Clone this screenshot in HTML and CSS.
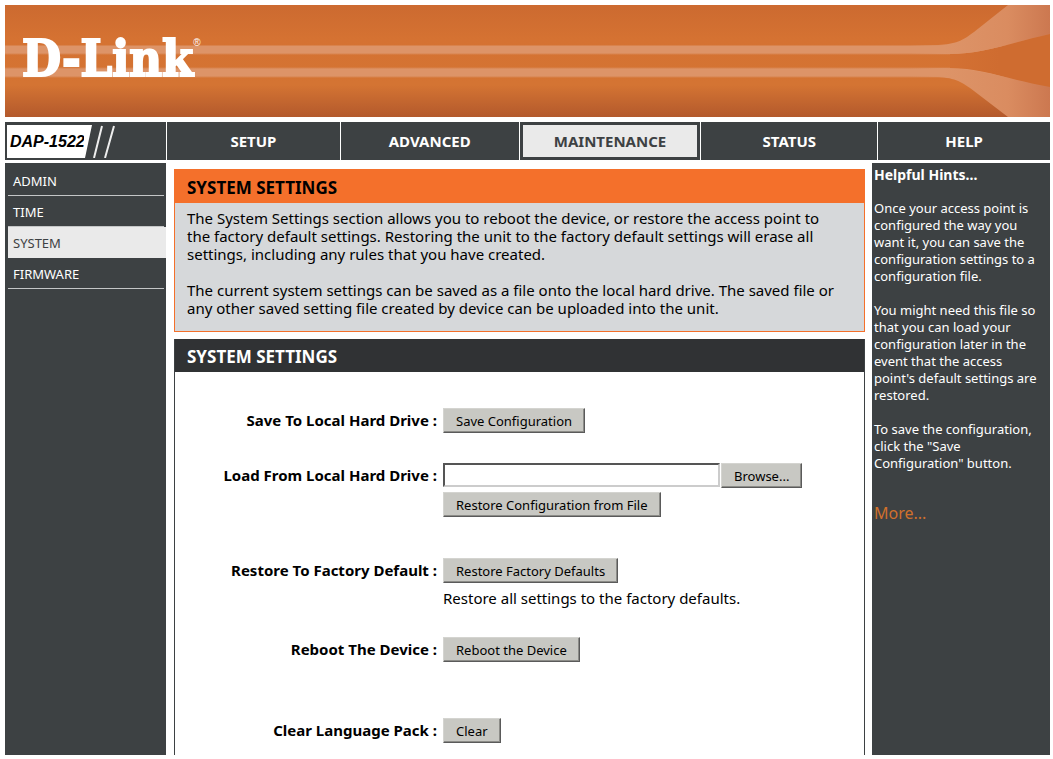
FILE: index.html
```html
<!DOCTYPE html>
<html lang="en">
<head>
    <meta charset="UTF-8">
    <meta name="viewport" content="width=device-width, initial-scale=1.0">
    <title>D-Link DAP-1522 : System Settings</title>
    <link rel="stylesheet" href="styles.css">
</head>
<body>

<!-- Banner -->
<header class="banner">
    <div class="brand">D-Link<sup class="reg">&reg;</sup></div>
    <svg class="banner-art" viewBox="0 0 140 112" preserveAspectRatio="none" aria-hidden="true">
        <defs>
            <linearGradient id="flare" gradientUnits="userSpaceOnUse" x1="0" y1="0" x2="140" y2="0">
                <stop offset="0" stop-color="#dd9468" stop-opacity="0"/>
                <stop offset="0.25" stop-color="#dd9468"/>
                <stop offset="0.7" stop-color="#da8c60"/>
                <stop offset="1" stop-color="#cc7850"/>
            </linearGradient>
            <linearGradient id="gap" gradientUnits="userSpaceOnUse" x1="30" y1="0" x2="90" y2="0">
                <stop offset="0" stop-color="#d47234"/>
                <stop offset="1" stop-color="#cf6c30"/>
            </linearGradient>
        </defs>
        <path d="M40 49 C72 49 96 39 140 29 L140 83 C96 74 72 63 40 63 Z" fill="url(#gap)"/>
        <path d="M0 40 L28 40 C46 39 52 36 64 27 L98 0 L140 0 L140 29 C96 39 72 49 40 49 L0 49 Z" fill="url(#flare)"/>
        <path d="M0 63 L28 63 C72 63 96 74 140 82 L140 112 L98 112 L64 86 C52 77 46 73 28 72 L0 72 Z" fill="url(#flare)"/>
    </svg>
</header>

<!-- Top Navigation -->
<nav class="topnav">
    <div class="model">
        <span class="model-name">DAP-1522</span>
        <svg class="slashes" width="32" height="33" viewBox="0 0 32 33" aria-hidden="true">
            <path d="M0 0 L8 0 L1 33 L0 33 Z" fill="#fff"/>
            <path d="M18 1 L10 33 M30 1 L21 33" stroke="#eee" stroke-width="2" fill="none"/>
        </svg>
    </div>
    <a href="#">SETUP</a>
    <a href="#">ADVANCED</a>
    <a href="#" class="current">MAINTENANCE</a>
    <a href="#">STATUS</a>
    <a href="#">HELP</a>
</nav>

<div class="columns">

    <!-- Side Menu -->
    <nav class="sidebar">
        <a href="#">ADMIN</a>
        <a href="#">TIME</a>
        <a href="#" class="current">SYSTEM</a>
        <a href="#">FIRMWARE</a>
    </nav>

    <main class="content">
        <section class="intro">
            <h1>SYSTEM SETTINGS</h1>
            <div class="intro-text">
                <p>The System Settings section allows you to reboot the device, or restore the access point to the factory default settings. Restoring the unit to the factory default settings will erase all settings, including any rules that you have created.</p>
                <p>The current system settings can be saved as a file onto the local hard drive. The saved file or any other saved setting file created by device can be uploaded into the unit.</p>
            </div>
        </section>

        <section class="box">
            <h2>SYSTEM SETTINGS</h2>
            <form class="settings">
                <label for="save">Save To Local Hard Drive :</label>
                <div class="field">
                    <button type="button" id="save">Save Configuration</button>
                </div>

                <label for="configFile">Load From Local Hard Drive :</label>
                <div class="field load">
                    <div class="file-row">
                        <input type="text" id="configFile" name="configFile">
                        <button type="button">Browse...</button>
                    </div>
                    <button type="button">Restore Configuration from File</button>
                </div>

                <label for="restore">Restore To Factory Default :</label>
                <div class="field">
                    <button type="button" id="restore">Restore Factory Defaults</button>
                    <p class="note">Restore all settings to the factory defaults.</p>
                </div>

                <label for="reboot">Reboot The Device :</label>
                <div class="field reboot">
                    <button type="button" id="reboot">Reboot the Device</button>
                </div>

                <label for="clear">Clear Language Pack :</label>
                <div class="field last">
                    <button type="button" id="clear">Clear</button>
                </div>
            </form>
        </section>
    </main>

    <!-- Help Column -->
    <aside class="hints">
        <h3>Helpful Hints...</h3>
        <p>Once your access point is configured the way you want it, you can save the configuration settings to a configuration file.</p>
        <p>You might need this file so that you can load your configuration later in the event that the access point's default settings are restored.</p>
        <p>To save the configuration, click the "Save Configuration" button.</p>
        <a href="#" class="more">More...</a>
    </aside>

</div>

</body>
</html>
```

FILE: styles.css
```css
* {
    box-sizing: border-box;
}

body {
    display: flex;
    flex-direction: column;
    min-height: 100vh;
    margin: 0;
    padding: 5px 3px 4px 5px;
    background-color: #fff;
    color: #000;
    font-family: "Noto Sans", Tahoma, sans-serif;
    font-size: 15px;
    line-height: 18px;
}

h1, h2, h3, p {
    margin: 0;
}

a {
    text-decoration: none;
}

/* Banner */
.banner {
    position: relative;
    display: flex;
    align-items: center;
    height: 112px;
    padding: 0 0 4px 17px;
    background: linear-gradient(transparent 40px, #dd9468 41px, #dd9468 48px, transparent 50px, transparent 62px, #dd9468 64px, #dd9468 71px, transparent 73px),
        linear-gradient(#cc6a30 0, #d57232 34px, #d47433 80px, #b3592c 112px);
}

.banner-art {
    position: absolute;
    top: 0;
    right: 0;
    width: 140px;
    height: 112px;
}

.brand {
    color: #fff;
    font-family: "DejaVu Serif Condensed", "DejaVu Serif", serif;
    font-size: 50px;
    font-weight: bold;
    line-height: 56px;
    -webkit-text-stroke: 2px #fff;
}

.reg {
    font-family: "Liberation Sans", sans-serif;
    font-size: 10px;
    font-weight: normal;
    line-height: 10px;
    vertical-align: 30px;
    -webkit-text-stroke: 0;
}

/* Top Navigation */
.topnav {
    display: grid;
    grid-template-columns: 161px 173fr 178fr 181fr 176fr 172fr;
    gap: 1px;
    height: 38px;
    margin-top: 5px;
}

.topnav a,
.model {
    display: flex;
    align-items: center;
    justify-content: center;
    background-color: #3d4143;
    color: #fff;
}

.topnav a {
    font-size: 15px;
    font-weight: bold;
}

.topnav .current {
    border: 3px solid #3d4143;
    background-color: #eaeaea;
    color: #3d4143;
}

.model {
    justify-content: flex-start;
    padding-left: 2px;
}

.model-name {
    height: 33px;
    padding-left: 3px;
    background-color: #fff;
    color: #000;
    font-family: "Liberation Sans", Arial, sans-serif;
    font-size: 16px;
    font-style: italic;
    font-weight: bold;
    line-height: 33px;
}

.slashes {
    margin-left: -1px;
}

/* Columns */
.columns {
    display: grid;
    flex: 1;
    grid-template-columns: 161px 1fr 178px;
    margin-top: 3px;
}

.sidebar,
.hints {
    background-color: #3d4143;
    color: #fff;
}

.sidebar {
    padding: 2px 0 0 3px;
}

.sidebar a {
    display: block;
    height: 31px;
    margin-right: 2px;
    padding-left: 5px;
    border-bottom: 1px solid #c4c6c7;
    color: #fff;
    font-size: 13px;
    line-height: 32px;
}

.sidebar .current {
    margin-right: 0;
    border-bottom-color: #eaeaea;
    background-color: #eaeaea;
    color: #3d4143;
}

/* Main Content */
.content {
    display: flex;
    flex-direction: column;
    padding: 6px 7px 0 8px;
}

.intro {
    border: 1px solid #f4702b;
    background-color: #d6d8da;
}

.intro h1,
.box h2 {
    height: 33px;
    padding-left: 12px;
    font-size: 17px;
    line-height: 36px;
}

.intro h1 {
    background-color: #f4702b;
}

.intro-text {
    padding: 6px 24px 14px 12px;
}

.intro-text p + p {
    margin-top: 18px;
}

.box {
    flex: 1;
    margin-top: 7px;
    border: 1px solid #3d4143;
    border-top: 0;
    border-bottom: 0;
}

.box h2 {
    background-color: #303234;
    color: #fff;
}

.settings {
    display: grid;
    grid-template-columns: 262px 1fr;
    column-gap: 6px;
    padding-top: 36px;
}

.settings label {
    font-size: 15px;
    font-weight: bold;
    line-height: 25px;
    text-align: right;
}

.field {
    margin-bottom: 30px;
}

.load {
    margin-bottom: 41px;
}

.reboot {
    margin-bottom: 56px;
}

.last {
    margin-bottom: 0;
}

.file-row {
    display: flex;
    gap: 1px;
    margin-bottom: 4px;
}

.field button {
    height: 25px;
    padding: 0 12px;
    border: 1px solid;
    border-color: #d4d4d0 #5a5a5a #5a5a5a #d4d4d0;
    box-shadow: inset -1px -1px #8c8c88;
    background-color: #c8c8c3;
    color: #000;
    font-family: inherit;
    font-size: 13px;
    line-height: 20px;
    vertical-align: top;
}

.field input {
    width: 277px;
    height: 24px;
    border: 2px solid;
    border-color: #555 #ccc #ccc #555;
    background-color: #fff;
    font-family: inherit;
    font-size: 13px;
}

.note {
    padding-top: 6px;
}

/* Help Column */
.hints {
    padding: 3px 8px 0 2px;
    font-size: 13px;
    line-height: 17px;
}

.hints h3 {
    margin-bottom: 17px;
    font-size: 14px;
}

.hints p {
    margin-bottom: 17px;
}

.more {
    display: block;
    margin-top: 33px;
    color: #d0702c;
    font-size: 16px;
}
```
